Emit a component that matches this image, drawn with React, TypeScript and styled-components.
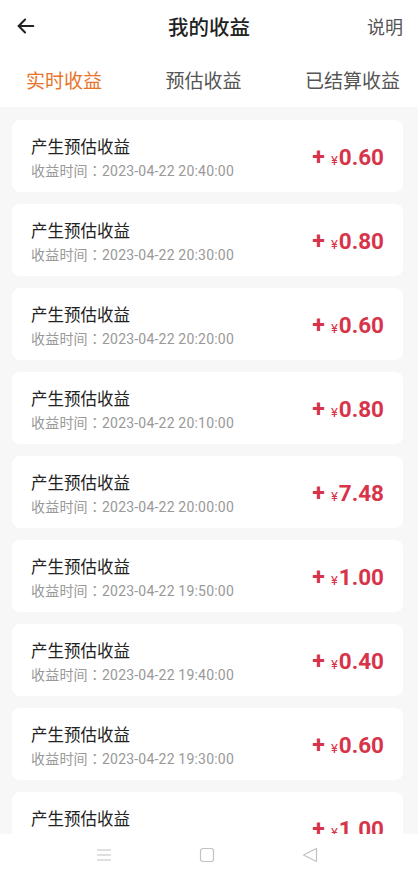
import React from 'react';
import styled, { createGlobalStyle } from 'styled-components';

const GlobalStyle = createGlobalStyle`
  html, body {
    margin: 0;
    padding: 0;
    background: #ffffff;
    font-family: Roboto, "Noto Sans CJK SC", sans-serif;
  }
`;

interface Record {
  time: string;
  amount: string;
}

const records: Record[] = [
  { time: '2023-04-22 20:40:00', amount: '0.60' },
  { time: '2023-04-22 20:30:00', amount: '0.80' },
  { time: '2023-04-22 20:20:00', amount: '0.60' },
  { time: '2023-04-22 20:10:00', amount: '0.80' },
  { time: '2023-04-22 20:00:00', amount: '7.48' },
  { time: '2023-04-22 19:50:00', amount: '1.00' },
  { time: '2023-04-22 19:40:00', amount: '0.40' },
  { time: '2023-04-22 19:30:00', amount: '0.60' },
  { time: '2023-04-22 19:20:00', amount: '1.00' },
];

const Page = styled.div`
  width: 418px;
  height: 874px;
  display: flex;
  flex-direction: column;
  overflow: hidden;
  background: #ffffff;
`;

const Header = styled.header`
  height: 52px;
  display: grid;
  grid-template-columns: 80px 1fr 80px;
  align-items: center;
  padding: 0 15px 0 15px;
`;

const BackButton = styled.div`
  display: flex;
  align-items: center;
  color: #222;
`;

const Title = styled.h1`
  margin: 0;
  text-align: center;
  font-size: 20.5px;
  font-weight: 500;
  color: #222;
`;

const HeaderAction = styled.span`
  justify-self: end;
  font-size: 18px;
  color: #555;
`;

const Tabs = styled.nav`
  height: 55px;
  display: flex;
  justify-content: space-between;
  align-items: center;
  padding: 0 18px 0 26px;
`;

const Tab = styled.span<{ $active?: boolean }>`
  font-size: 19px;
  color: ${(p) => (p.$active ? '#e8742a' : '#555')};
`;

const List = styled.main`
  flex: 1;
  overflow: hidden;
  background: #f7f7f7;
  padding: 13px 15px 0 12px;
  display: flex;
  flex-direction: column;
  gap: 12px;
`;

const Card = styled.div`
  flex-shrink: 0;
  height: 72px;
  background: #ffffff;
  border-radius: 8px;
  display: flex;
  align-items: center;
  justify-content: space-between;
  padding: 0 19px 0 19px;
  box-sizing: border-box;
`;

const Info = styled.div`
  display: flex;
  flex-direction: column;
  gap: 1px;
  margin-top: 5px;
`;

const ItemTitle = styled.span`
  font-size: 16.5px;
  color: #222;
  line-height: 22px;
`;

const ItemTime = styled.span`
  font-size: 14px;
  color: #999;
  line-height: 20px;
  letter-spacing: 0.2px;
  text-spacing-trim: space-all;
`;

const Colon = styled.span`
  font-family: "Noto Sans CJK JP", sans-serif;
  text-spacing-trim: space-all;
`;

const Amount = styled.div`
  display: flex;
  align-items: baseline;
  color: #d7344a;
  font-weight: 700;
  margin-top: 2px;
`;

const Plus = styled.span`
  font-size: 23px;
  margin-right: 6px;
`;

const Yen = styled.span`
  font-size: 13px;
  font-weight: 400;
  margin-right: 1px;
`;

const Value = styled.span`
  font-size: 22.5px;
`;

const NavBar = styled.footer`
  height: 38px;
  flex-shrink: 0;
  background: #ffffff;
  display: flex;
  justify-content: space-between;
  align-items: center;
  padding: 2px 100px 0 96px;
  color: #c2c2c2;
`;

const ArrowLeft = () => (
  <svg width="22" height="22" viewBox="0 0 24 24" fill="none" stroke="currentColor" strokeWidth="2.2" strokeLinecap="round" strokeLinejoin="round">
    <path d="M20 12H4" />
    <path d="M11 5l-7 7 7 7" />
  </svg>
);

const MenuIcon = () => (
  <svg width="16" height="14" viewBox="0 0 16 14" fill="none" stroke="currentColor" strokeWidth="1.2">
    <path d="M1 2h14M1 7h14M1 12h14" />
  </svg>
);

const SquareIcon = () => (
  <svg width="16" height="16" viewBox="0 0 16 16" fill="none" stroke="currentColor" strokeWidth="1.2">
    <rect x="1.5" y="1.5" width="13" height="13" rx="2.5" />
  </svg>
);

const BackIcon = () => (
  <svg width="16" height="16" viewBox="0 0 16 16" fill="none" stroke="currentColor" strokeWidth="1.2" strokeLinejoin="round">
    <path d="M14.5 1.5v13L1.5 8z" />
  </svg>
);

export default function App() {
  return (
    <Page>
      <GlobalStyle />
      <Header>
        <BackButton>
          <ArrowLeft />
        </BackButton>
        <Title>我的收益</Title>
        <HeaderAction>说明</HeaderAction>
      </Header>
      <Tabs>
        <Tab $active>实时收益</Tab>
        <Tab>预估收益</Tab>
        <Tab>已结算收益</Tab>
      </Tabs>
      <List>
        {records.map((r) => (
          <Card key={r.time}>
            <Info>
              <ItemTitle>产生预估收益</ItemTitle>
              <ItemTime>
                收益时间<Colon>：</Colon>
                {r.time}
              </ItemTime>
            </Info>
            <Amount>
              <Plus>+</Plus>
              <Yen>¥</Yen>
              <Value>{r.amount}</Value>
            </Amount>
          </Card>
        ))}
      </List>
      <NavBar>
        <MenuIcon />
        <SquareIcon />
        <BackIcon />
      </NavBar>
    </Page>
  );
}
